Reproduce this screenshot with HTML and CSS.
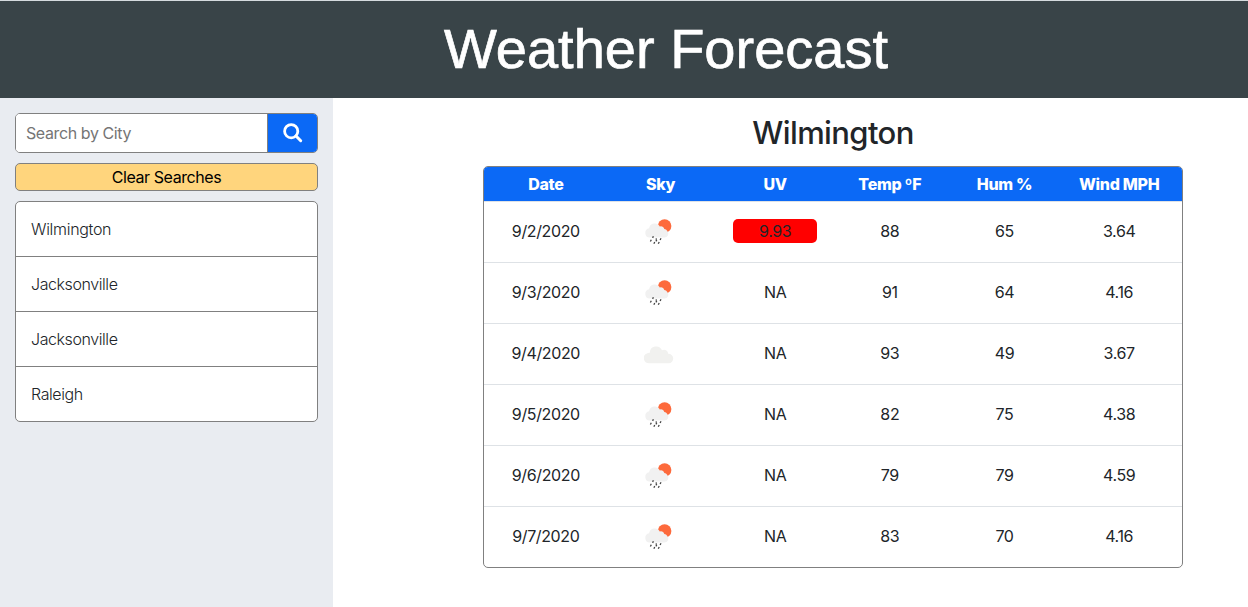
FILE: index.html
```
<!DOCTYPE html>
<html lang="en">
<head>
<meta charset="utf-8">
<title>Weather Forecast</title>
<link rel="stylesheet" href="styles.css">
</head>
<body>
<svg class="sprite" aria-hidden="true">
  <symbol id="rain" viewBox="0 0 30 30">
    <circle cx="20.600" cy="9" r="6.800" fill="#fd6a3c"/>
    <path d="M5.700 20.600a4.700 4.700 0 0 1-.6-9.300A5.700 5.700 0 0 1 15.800 9.600a3.300 3.300 0 0 1 4.500 2.500 4.300 4.300 0 0 1 3 1.800 4 4 0 0 1-2.500 6.700z" fill="#f1f1f1"/>
    <path d="M9.400 19.200l-.8 1.700M7.300 22.700l-.9 1.800M12.400 21.400l-.4 1.200M12.800 22.800l-.9 1.600M10.700 25l-.8 1.700M17 21.200l-.9 1.800M15.200 25l-.9 1.800" stroke="#444" stroke-width="1.300" fill="none"/>
  </symbol>
  <symbol id="cloud" viewBox="0 0 30 30">
    <path d="M5 24.200a5.200 5.200 0 0 1-1-10.300 4 4 0 0 1 1.900-.1A6.300 6.300 0 0 1 18 11.300a4.100 4.100 0 0 1 6.200 3.400 4.750 4.750 0 0 1 .500 9.500z" fill="#f1f1ef"/>
  </symbol>
</svg>
<header class="banner"><h1 class="title">Weather Forecast</h1></header>
<div class="layout">
  <aside class="sidebar">
    <form class="search">
      <input class="search-input" type="text" placeholder="Search by City">
      <button class="search-button" type="button" aria-label="Search">
        <svg class="search-icon" viewBox="0 0 20 20"><circle cx="8.200" cy="8.200" r="6.600" fill="none" stroke="#fff" stroke-width="2.800"/><path d="M13 13l4.700 4.700" stroke="#fff" stroke-width="3" stroke-linecap="round"/></svg>
      </button>
    </form>
    <button class="clear" type="button">Clear Searches</button>
    <ul class="history">
      <li class="city">Wilmington</li>
      <li class="city">Jacksonville</li>
      <li class="city">Jacksonville</li>
      <li class="city">Raleigh</li>
    </ul>
  </aside>
  <main class="main">
    <h2 class="place">Wilmington</h2>
    <div class="forecast">
      <div class="row head"><span>Date</span><span>Sky</span><span>UV</span><span>Temp ºF</span><span>Hum %</span><span>Wind MPH</span></div>
      <div class="row"><span>9/2/2020</span><svg class="sky"><use href="#rain"/></svg><span class="uv">9.93</span><span>88</span><span>65</span><span>3.64</span></div>
      <div class="row"><span>9/3/2020</span><svg class="sky"><use href="#rain"/></svg><span>NA</span><span>91</span><span>64</span><span>4.16</span></div>
      <div class="row"><span>9/4/2020</span><svg class="sky"><use href="#cloud"/></svg><span>NA</span><span>93</span><span>49</span><span>3.67</span></div>
      <div class="row"><span>9/5/2020</span><svg class="sky"><use href="#rain"/></svg><span>NA</span><span>82</span><span>75</span><span>4.38</span></div>
      <div class="row"><span>9/6/2020</span><svg class="sky"><use href="#rain"/></svg><span>NA</span><span>79</span><span>79</span><span>4.59</span></div>
      <div class="row"><span>9/7/2020</span><svg class="sky"><use href="#rain"/></svg><span>NA</span><span>83</span><span>70</span><span>4.16</span></div>
    </div>
  </main>
</div>
</body>
</html>
```
FILE: styles.css
```
* { box-sizing: border-box; }
body {
  margin: 0;
  height: 607px;
  display: flex;
  flex-direction: column;
  overflow: hidden;
  background: #fff;
  color: #212529;
  font: 16px/24px Inter, sans-serif;
  letter-spacing: -0.37px;
}
.sprite { display: none; }
.banner {
  height: 98px;
  padding-left: 84px;
  background: #394448;
  border-top: 1px solid #d5dbde;
  text-align: center;
}
.title {
  margin: 0;
  color: #fff;
  font: 400 56px/96px "Liberation Sans", Arial, sans-serif;
  letter-spacing: 0;
  -webkit-text-stroke: 0.7px #fff;
}
.layout { flex: 1; display: flex; }
.sidebar {
  width: 333px;
  padding: 15px;
  background: #e9ecf1;
  display: flex;
  flex-direction: column;
  gap: 10px;
}
.search {
  display: flex;
  height: 40px;
  border: 1px solid #808080;
  border-radius: 5px;
  overflow: hidden;
  background: #fff;
}
.search-input {
  flex: 1;
  min-width: 0;
  border: 0;
  padding: 0 10px;
  font: inherit;
  letter-spacing: -0.4px;
}
.search-input::placeholder { color: #757575; }
.search-button {
  width: 50px;
  padding: 0;
  border: 0;
  border-left: 1px solid #808080;
  background: #0b69f6;
  display: grid;
  place-items: center;
}
.search-icon { width: 20px; height: 20px; }
.clear {
  height: 28px;
  padding: 0;
  border: 1px solid #808080;
  border-radius: 5px;
  background: #ffd57d;
  color: #000;
  font: inherit;
  letter-spacing: -0.42px;
}
.history {
  list-style: none;
  margin: 0;
  padding: 0;
  border: 1px solid #808080;
  border-radius: 5px;
  background: #fff;
}
.city { height: 55px; padding: 15px; font-weight: 300; letter-spacing: -0.42px; }
.city:first-child { height: 54px; letter-spacing: -0.3px; }
.city + .city { border-top: 1px solid #808080; }
.main {
  flex: 1;
  padding: 15px 65px 0 150px;
}
.place {
  margin: 0 0 13px;
  text-align: center;
  font-size: 31px;
  line-height: 40px;
  font-weight: 500;
  letter-spacing: -0.6px;
}
.forecast {
  width: 700px;
  border: 1px solid #808080;
  border-radius: 5px;
  overflow: hidden;
}
.row {
  display: grid;
  grid-template-columns: repeat(6, 1fr);
  align-items: center;
  justify-items: center;
  height: 61px;
  padding: 0 5.500px 2px 4.500px;
  border-top: 1px solid #dee2e6;
}
.head {
  height: 34px;
  padding-bottom: 0;
  border: 0;
  background: #0b69f6;
  color: #fff;
  font-weight: 800;
  letter-spacing: -0.3px;
}
.sky { width: 30px; height: 30px; margin: 2px 3px 0 0; }
.uv { width: 84px; border-radius: 5px; background: #f00; text-align: center; }
```
